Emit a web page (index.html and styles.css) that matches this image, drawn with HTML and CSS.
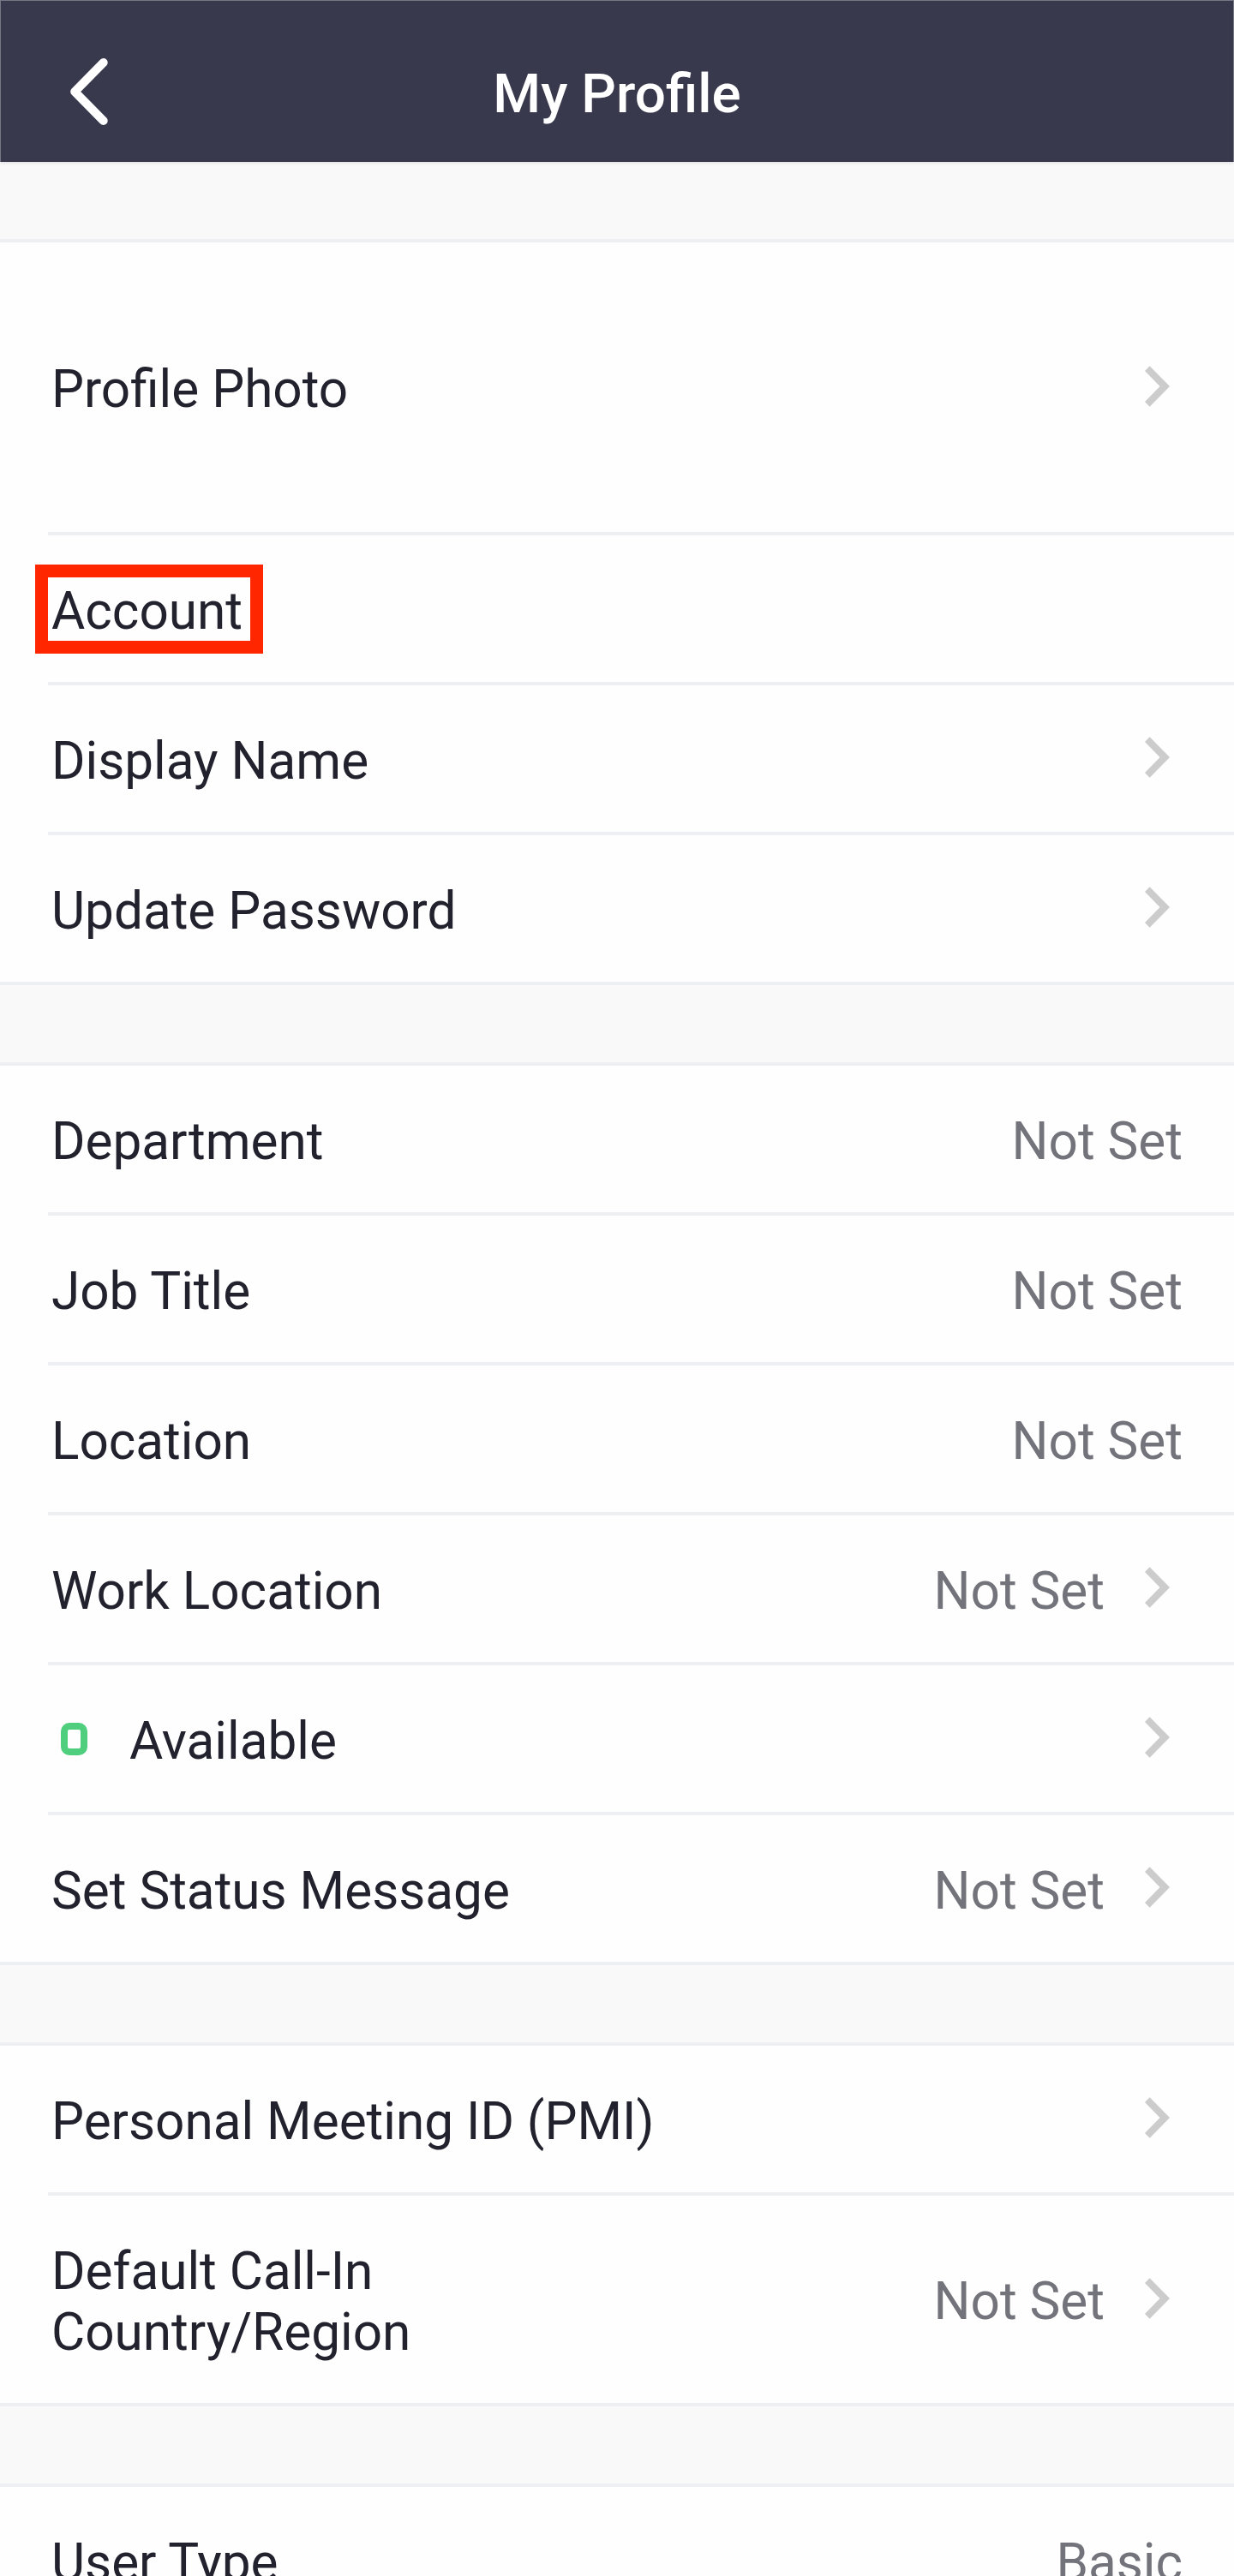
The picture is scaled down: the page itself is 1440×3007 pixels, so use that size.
FILE: index.html
```html
<!DOCTYPE html>
<html lang="en">
<head>
<meta charset="utf-8">
<title>My Profile</title>
<link rel="stylesheet" href="styles.css">
</head>
<body>
<svg class="sprite" aria-hidden="true">
  <symbol id="chevron" viewBox="0 0 29 48"><path d="M0 6 5.6 .3 29 24 5.6 47.7 0 42 17.6 24z" fill="#ccc"/></symbol>
</svg>
<div class="screen">
  <header class="topbar">
    <svg class="back" viewBox="0 0 44 78"><path d="M38.7 5 5.2 39l33.5 34" fill="none" stroke="#fff" stroke-width="10" stroke-linecap="round" stroke-linejoin="round"/></svg>
    <h1 class="title">My Profile</h1>
  </header>
  <main class="content">
    <section class="group">
      <div class="row row-photo"><span class="label">Profile Photo</span><svg class="chevron"><use href="#chevron"/></svg></div>
      <div class="row"><span class="label marked">Account</span></div>
      <div class="row"><span class="label">Display Name</span><svg class="chevron"><use href="#chevron"/></svg></div>
      <div class="row"><span class="label">Update Password</span><svg class="chevron"><use href="#chevron"/></svg></div>
    </section>
    <section class="group">
      <div class="row"><span class="label">Department</span><span class="value">Not Set</span></div>
      <div class="row"><span class="label">Job Title</span><span class="value">Not Set</span></div>
      <div class="row"><span class="label">Location</span><span class="value">Not Set</span></div>
      <div class="row"><span class="label">Work Location</span><span class="value">Not Set</span><svg class="chevron"><use href="#chevron"/></svg></div>
      <div class="row"><span class="presence"></span><span class="label">Available</span><svg class="chevron"><use href="#chevron"/></svg></div>
      <div class="row"><span class="label">Set Status Message</span><span class="value">Not Set</span><svg class="chevron"><use href="#chevron"/></svg></div>
    </section>
    <section class="group">
      <div class="row"><span class="label">Personal Meeting ID (PMI)</span><svg class="chevron"><use href="#chevron"/></svg></div>
      <div class="row row-tall"><span class="label">Default Call-In<br>Country/Region</span><span class="value">Not Set</span><svg class="chevron"><use href="#chevron"/></svg></div>
    </section>
    <section class="group">
      <div class="row"><span class="label">User Type</span><span class="value">Basic</span></div>
    </section>
  </main>
</div>
</body>
</html>
```
FILE: styles.css
```css
*, *::before { box-sizing: border-box; }
body { margin: 0; background: #f9f9fa; font-family: Roboto, sans-serif; }
.sprite { display: none; }
.screen { width: 1440px; height: 3007px; overflow: hidden; }
.topbar {
  display: grid;
  grid-template-columns: 82px 44px 1fr 126px;
  align-items: center;
  height: 189px;
  padding-top: 25px;
  background: #39394d;
  box-shadow: inset 1px 1px #767785, inset -1px 0 #767785, 0 1px 4px rgba(0, 0, 0, .12);
}
.back { grid-column: 2; width: 44px; height: 78px; }
.title {
  grid-column: 3;
  margin: 0;
  padding-top: 5px;
  color: #fff;
  font-size: 63.8px;
  font-weight: 500;
  line-height: 76px;
  text-align: center;
}
.content { display: flex; flex-direction: column; gap: 90px; padding-top: 90px; }
.group { background: #fefefe; border: solid #eeeff3; border-width: 4px 0; }
.row {
  display: flex;
  align-items: center;
  height: 175px;
  margin-left: 56px;
  padding: 0 60px 0 4px;
  border-bottom: 4px solid #eeeff3;
}
.row:last-child { height: 171px; border-bottom: 0; }
.row-photo { height: 342px; }
.row-tall:last-child { height: 242px; }
.label, .value { padding-top: 7px; font-size: 60.25px; line-height: 70.5px; white-space: nowrap; }
.label { flex: 1; color: #22222e; }
.value { color: #73737b; }
.chevron { width: 29px; height: 48px; margin: 0 15px 3px 47px; }
.marked { position: relative; }
.marked::before {
  content: "";
  position: absolute;
  left: -18.6px;
  top: -12.5px;
  width: 265.4px;
  height: 104px;
  border: 15px solid #ff2600;
}
.presence {
  width: 31px;
  height: 38px;
  margin: 0 49px 0 11px;
  border: 8px solid #4fcf7e;
  border-radius: 10px;
}
```
